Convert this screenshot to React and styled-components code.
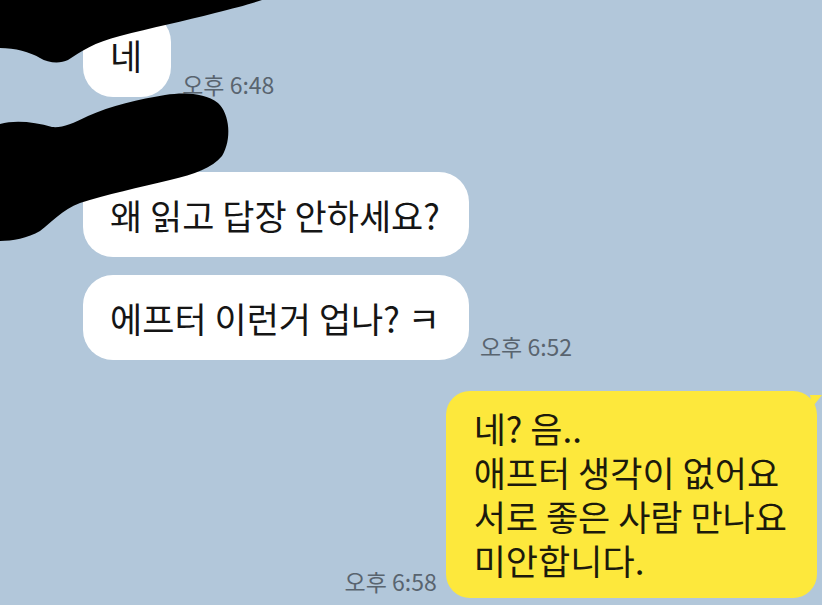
import styled, { createGlobalStyle } from "styled-components";

const GlobalStyle = createGlobalStyle`
  body {
    margin: 0;
    background: #b2c7da;
  }
`;

const Screen = styled.div`
  box-sizing: border-box;
  position: relative;
  width: 822px;
  height: 605px;
  overflow: hidden;
  padding: 12px 5px 0 83px;
  background: #b2c7da;
  display: flex;
  flex-direction: column;
  font-family: "Noto Sans CJK KR", "Noto Sans", sans-serif;
`;

const Row = styled.div`
  display: flex;
  flex-direction: row;
  align-items: flex-end;
  justify-content: ${(p) => (p.$mine ? "flex-end" : "flex-start")};
  gap: ${(p) => (p.$mine ? "9px" : "11px")};
  margin-top: ${(p) => p.$top || 0}px;
`;

const Bubble = styled.div`
  box-sizing: border-box;
  position: relative;
  background: #ffffff;
  border-radius: 30px;
  padding: 22px 29px 21px 27px;
  font-size: 35px;
  line-height: 42px;
  color: #151515;
  white-space: nowrap;
`;

const MyBubble = styled.div`
  box-sizing: border-box;
  position: relative;
  background: #fde83c;
  border-radius: 24px;
  padding: 15px 30px 16px 28px;
  color: #1c1a0c;
  white-space: nowrap;

  &::after {
    content: "";
    position: absolute;
    top: 4px;
    right: -5px;
    width: 12px;
    height: 12px;
    background: #fde83c;
    clip-path: polygon(0 0, 100% 0, 20% 100%);
  }
`;

const Line = styled.div`
  height: 44px;
  font-size: 35px;
  line-height: 44px;
`;

const Time = styled.span`
  font-size: 23px;
  line-height: 26px;
  color: #59646f;
  margin-bottom: ${(p) => p.$lift || 0}px;
  white-space: nowrap;
`;

const Scribble = styled.svg`
  position: absolute;
  left: 0;
  top: 0;
  width: 822px;
  height: 605px;
  pointer-events: none;
`;

const myLines = ["네? 음..", "애프터 생각이 없어요", "서로 좋은 사람 만나요", "미안합니다."];

function App() {
  return (
    <>
      <GlobalStyle />
      <Screen>
        <Row>
          <Bubble>네</Bubble>
          <Time>오후 6:48</Time>
        </Row>
        <Row $top={75}>
          <Bubble>왜 읽고 답장 안하세요?</Bubble>
        </Row>
        <Row $top={18}>
          <Bubble>에프터 이런거 업나? ㅋ</Bubble>
          <Time $lift={1}>오후 6:52</Time>
        </Row>
        <Row $mine $top={31}>
          <Time $lift={4}>오후 6:58</Time>
          <MyBubble>
            {myLines.map((line) => (
              <Line key={line}>{line}</Line>
            ))}
          </MyBubble>
        </Row>

        {/* 가림 낙서 */}
        <Scribble viewBox="0 0 822 605">
          <path
            d="M0 0 L262 0 C250 4 235 8 215 13 C185 21 150 28 120 36 C95 42 80 52 68 60 C60 64 48 63 40 58 C30 52 15 48 0 48 Z"
            fill="#000"
          />
          <path
            d="M0 124 C15 120 35 122 52 127 C62 128 72 124 88 116 C110 106 140 99 165 95 C185 92 205 93 218 103 C230 114 232 140 222 156 C212 168 195 174 170 180 C140 187 105 195 80 203 C62 210 52 222 40 231 C28 238 12 241 0 241 Z"
            fill="#000"
          />
        </Scribble>
      </Screen>
    </>
  );
}

export default App;
